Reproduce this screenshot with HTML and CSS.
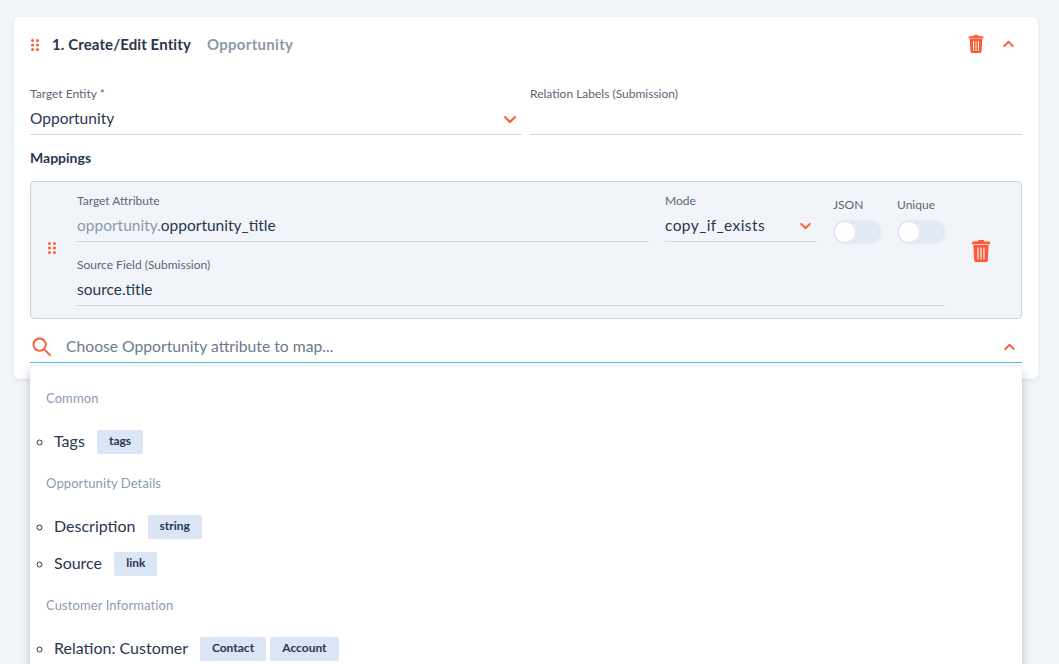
FILE: index.html
```html
<!DOCTYPE html>
<html lang="en">

<head>
    <meta charset="UTF-8">
    <title>Create/Edit Entity</title>
    <link rel="stylesheet" href="styles.css">
</head>

<body>
    <svg class="sprites" width="0" height="0">
        <symbol id="trash" viewBox="0 0 18 22">
            <path fill-rule="evenodd" d="M6.500 0h5l.8 1.500H17c.6 0 1 .4 1 1V4.200H0V2.500c0-.6.4-1 1-1h4.700zM1.300 5h15.400l-.9 15.200c-.1 1.100-.9 1.800-2 1.800H4.200c-1.100 0-1.900-.7-2-1.800zM5.400 7.500v12h1.200v-12zm3 0v12h1.200v-12zm3 0v12h1.200v-12z"/>
        </symbol>
        <symbol id="drag" viewBox="0 0 8 12">
            <circle cx="1.500" cy="1.500" r="1.500"/><circle cx="6.500" cy="1.500" r="1.500"/>
            <circle cx="1.500" cy="6" r="1.500"/><circle cx="6.500" cy="6" r="1.500"/>
            <circle cx="1.500" cy="10.500" r="1.500"/><circle cx="6.500" cy="10.500" r="1.500"/>
        </symbol>
        <symbol id="chevron" viewBox="0 0 14 9">
            <path d="M1.500 1.500 7 7l5.500-5.500" fill="none" stroke="currentColor" stroke-width="2.200"/>
        </symbol>
    </svg>

    <div class="card">
        <div class="card-head">
            <svg class="drag"><use href="#drag"></use></svg>
            <span class="card-title">1. Create/Edit Entity</span>
            <span class="card-sub">Opportunity</span>
            <svg class="trash trash-head"><use href="#trash"></use></svg>
            <svg class="chevron chevron-up chevron-head"><use href="#chevron"></use></svg>
        </div>

        <div class="entity-row">
            <div class="field">
                <label>Target Entity *</label>
                <div class="field-value">
                    <span>Opportunity</span>
                    <svg class="chevron"><use href="#chevron"></use></svg>
                </div>
            </div>
            <div class="field">
                <label>Relation Labels (Submission)</label>
                <div class="field-value"></div>
            </div>
        </div>

        <div class="mappings-title">Mappings</div>

        <div class="mapping">
            <svg class="drag"><use href="#drag"></use></svg>
            <div class="mapping-fields">
                <div class="mapping-top">
                    <div class="field field-attr">
                        <label>Target Attribute</label>
                        <div class="field-value"><span><span class="prefix">opportunity.</span>opportunity_title</span></div>
                    </div>
                    <div class="field field-mode">
                        <label>Mode</label>
                        <div class="field-value">
                            <span>copy_if_exists</span>
                            <svg class="chevron"><use href="#chevron"></use></svg>
                        </div>
                    </div>
                    <div class="switch-wrap">
                        <label>JSON</label>
                        <div class="switch"><div class="knob"></div></div>
                    </div>
                    <div class="switch-wrap">
                        <label>Unique</label>
                        <div class="switch"><div class="knob"></div></div>
                    </div>
                </div>
                <div class="field field-source">
                    <label>Source Field (Submission)</label>
                    <div class="field-value"><span>source.title</span></div>
                </div>
            </div>
            <svg class="trash trash-mapping"><use href="#trash"></use></svg>
        </div>

        <div class="search">
            <svg class="search-icon" viewBox="0 0 20 20" fill="none" stroke="#ff5a35" stroke-width="2">
                <circle cx="8" cy="8" r="6.500"/>
                <path d="M12.700 12.700 19 19" stroke-linecap="round"/>
            </svg>
            <span class="search-text">Choose Opportunity attribute to map...</span>
            <svg class="chevron chevron-up"><use href="#chevron"></use></svg>

            <div class="dropdown">
                <div class="group-label">Common</div>
                <ul>
                    <li>Tags <span class="tag">tags</span></li>
                </ul>
                <div class="group-label">Opportunity Details</div>
                <ul>
                    <li>Description <span class="tag">string</span></li>
                    <li>Source <span class="tag">link</span></li>
                </ul>
                <div class="group-label">Customer Information</div>
                <ul class="list-last">
                    <li>Relation: Customer <span class="tag">Contact</span> <span class="tag tag-next">Account</span></li>
                </ul>
            </div>
        </div>
    </div>
</body>

</html>
```

FILE: styles.css
```css
html, body {
    margin: 0;
    height: 100%;
    overflow: hidden;
}

body {
    background-color: #f1f5f9;
    padding: 17px 21px 0 14px;
    box-sizing: border-box;
    font-family: "Lato", "Open Sans", sans-serif;
    color: #2a3650;
}

.sprites {
    position: absolute;
}

svg {
    display: block;
    flex: none;
}

.card {
    background-color: white;
    border-radius: 5px;
    height: 362px;
    padding: 0 16px;
    box-shadow: 0 1px 3px rgba(60, 80, 110, 0.12);
}

.card-head {
    display: flex;
    align-items: center;
    height: 54px;
}

.drag {
    width: 8px;
    height: 12px;
    fill: #ff5a35;
}

.card-head .drag {
    margin-left: 1px;
    margin-right: 13px;
    margin-top: 2px;
}

.card-title {
    font-size: 15px;
    font-weight: 700;
    letter-spacing: 0.1px;
    margin-top: -1px;
}

.card-sub {
    font-size: 15px;
    font-weight: 700;
    letter-spacing: 0.3px;
    color: #8d97a8;
    margin-left: 16px;
    margin-top: -1px;
}

.trash {
    fill: #ff5a35;
}

.trash-head {
    width: 16px;
    height: 18px;
    margin-left: auto;
}

.chevron {
    width: 14px;
    height: 9px;
    color: #ff5a35;
}

.chevron-up {
    transform: rotate(180deg);
}

.chevron-head {
    width: 13px;
    height: 8px;
    margin-left: 18px;
    margin-right: 7px;
}

.entity-row {
    display: flex;
    gap: 8px;
    margin-top: 13px;
}

.entity-row .field {
    flex: 1;
}

label {
    display: block;
    font-size: 12px;
    line-height: 20px;
    color: #5c6675;
}

.field-value {
    display: flex;
    align-items: center;
    justify-content: space-between;
    height: 27px;
    padding-bottom: 3px;
    font-size: 15.5px;
    border-bottom: 1px solid #cbdbe8;
}

.field-value .chevron {
    margin-right: 5px;
    margin-top: 3px;
}

.mappings-title {
    font-size: 14px;
    font-weight: 700;
    line-height: 20px;
    margin-top: 13px;
}

.mapping {
    display: flex;
    height: 138px;
    box-sizing: border-box;
    margin-top: 13px;
    background-color: #f1f5f9;
    border: 1px solid #c9d0da;
    border-radius: 4px;
    padding: 9px 31px 0 17px;
}

.mapping .drag {
    margin-right: 21px;
    margin-top: 51px;
}

.mapping-fields {
    width: 868px;
}

.mapping-top {
    display: flex;
    height: 51px;
    margin-bottom: 13px;
}

.mapping .field-value {
    border-bottom-color: #cdd6e2;
}

.field-attr {
    width: 572px;
    margin-right: 16px;
}

.field-mode {
    width: 152px;
    margin-right: 16px;
}

.field-mode .field-value .chevron {
    width: 13px;
    height: 8px;
    margin-right: 5px;
}

.field-mode span {
    letter-spacing: 0.4px;
}

.prefix {
    color: #8d99ab;
}

.switch-wrap {
    width: 48px;
    padding-top: 4px;
    margin-right: 16px;
}

.switch-wrap:last-child {
    margin-right: 0;
}

.switch {
    width: 48px;
    height: 24px;
    margin-top: 5px;
    background-color: #e2e9f5;
    border-radius: 12px;
    padding: 2px;
    box-sizing: border-box;
}

.knob {
    width: 20px;
    height: 20px;
    background-color: white;
    border-radius: 50%;
}

.trash-mapping {
    width: 18px;
    height: 22px;
    margin-left: 27px;
    margin-top: 49px;
}

.search {
    position: relative;
    display: flex;
    align-items: center;
    height: 33px;
    margin-top: 11px;
    box-sizing: border-box;
    border-bottom: 1px solid #53bdf0;
}

.search-icon {
    width: 19px;
    height: 19px;
    margin-left: 2px;
    margin-right: 15px;
    margin-top: 1px;
}

.search-text {
    font-size: 15.7px;
    color: #6d7a8c;
}

.search .chevron {
    width: 13px;
    height: 8px;
    margin-left: auto;
    margin-right: 6px;
    margin-top: 2px;
}

.dropdown {
    position: absolute;
    top: 37px;
    left: 0;
    right: 0;
    height: 320px;
    padding: 21px 16px 0;
    box-sizing: border-box;
    background-color: white;
    border-radius: 4px 4px 0 0;
    box-shadow: 0 3px 10px rgba(50, 70, 100, 0.3);
}

.group-label {
    font-size: 13px;
    letter-spacing: 0.1px;
    line-height: 20px;
    color: #8d9bb0;
    margin-bottom: 22px;
}

.dropdown ul {
    list-style-type: circle;
    margin: 0 0 19px;
    padding-left: 8px;
}

.dropdown .list-last {
    margin-top: 1px;
}

.dropdown li {
    height: 24px;
    line-height: 21px;
    font-size: 16px;
    margin-bottom: 13px;
}

.dropdown li:last-child {
    margin-bottom: 0;
}

.tag {
    display: inline-block;
    height: 24px;
    line-height: 22px;
    padding: 0 12px;
    margin-left: 8px;
    vertical-align: top;
    font-size: 12px;
    font-weight: 700;
    background-color: #dae6f6;
    border-radius: 2px;
}

.tag-next {
    margin-left: 0;
}
```
